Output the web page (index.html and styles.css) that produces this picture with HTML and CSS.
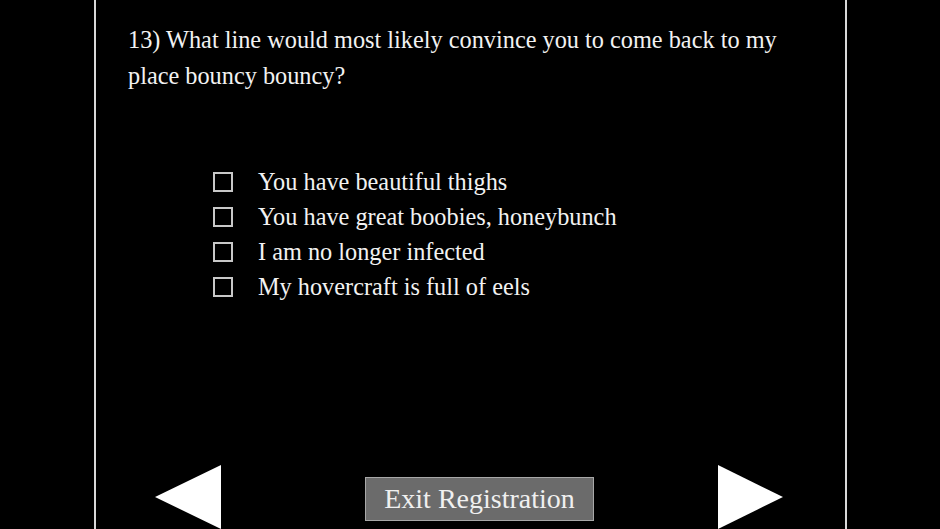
FILE: index.html
```html
<!DOCTYPE html>
<html lang="en">
<head>
<meta charset="utf-8">
<title>Registration</title>
<link rel="stylesheet" href="styles.css">
</head>
<body>
<main class="panel">
  <p class="question">13) What line would most likely convince you to come back to my place bouncy bouncy?</p>
  <ul class="options">
    <li class="option"><span class="box"></span><span class="label">You have beautiful thighs</span></li>
    <li class="option"><span class="box"></span><span class="label">You have great boobies, honeybunch</span></li>
    <li class="option"><span class="box"></span><span class="label">I am no longer infected</span></li>
    <li class="option"><span class="box"></span><span class="label">My hovercraft is full of eels</span></li>
  </ul>
  <nav class="footer">
    <svg class="arrow prev" width="66" height="64" viewBox="0 0 66 64"><polygon points="66,0 66,64 0,32" fill="#ffffff"/></svg>
    <button class="exit" type="button">Exit Registration</button>
    <svg class="arrow next" width="65" height="64" viewBox="0 0 65 64"><polygon points="0,0 0,64 65,32" fill="#ffffff"/></svg>
  </nav>
</main>
</body>
</html>
```

FILE: styles.css
```css
html, body {
  margin: 0;
  padding: 0;
  background: #000;
}
body {
  width: 940px;
  height: 529px;
  overflow: hidden;
  font-family: "Liberation Serif", "Times New Roman", serif;
  color: #f2f2f2;
}
.panel {
  box-sizing: border-box;
  margin-left: 94px;
  width: 753px;
  height: 529px;
  border-left: 2px solid #d8d8d8;
  border-right: 2px solid #d8d8d8;
  display: flex;
  flex-direction: column;
  padding: 22px 30px 0 32px;
}
.question {
  margin: 0;
  font-size: 24.3px;
  line-height: 36px;
}
.options {
  list-style: none;
  margin: 70px 0 0 85px;
  padding: 0;
}
.option {
  display: flex;
  align-items: center;
  height: 35px;
  font-size: 24.3px;
  line-height: 35px;
}
.box {
  box-sizing: border-box;
  width: 20px;
  height: 20px;
  border: 2px solid #c8c8c8;
  margin-right: 25px;
  flex: none;
}
.footer {
  margin-top: auto;
  display: flex;
  align-items: center;
  height: 64px;
  margin-left: 27px;
}
.arrow {
  display: block;
  flex: none;
}
.exit {
  box-sizing: border-box;
  width: 229px;
  height: 44px;
  margin: 4px 0 0 144px;
  padding: 0;
  background: #6b6b6b;
  border: 1px solid #a8a8a8;
  color: #f0f0f0;
  font-family: "Liberation Serif", "Times New Roman", serif;
  font-size: 28px;
  line-height: 40px;
}
.next {
  margin-left: 124px;
}
```
